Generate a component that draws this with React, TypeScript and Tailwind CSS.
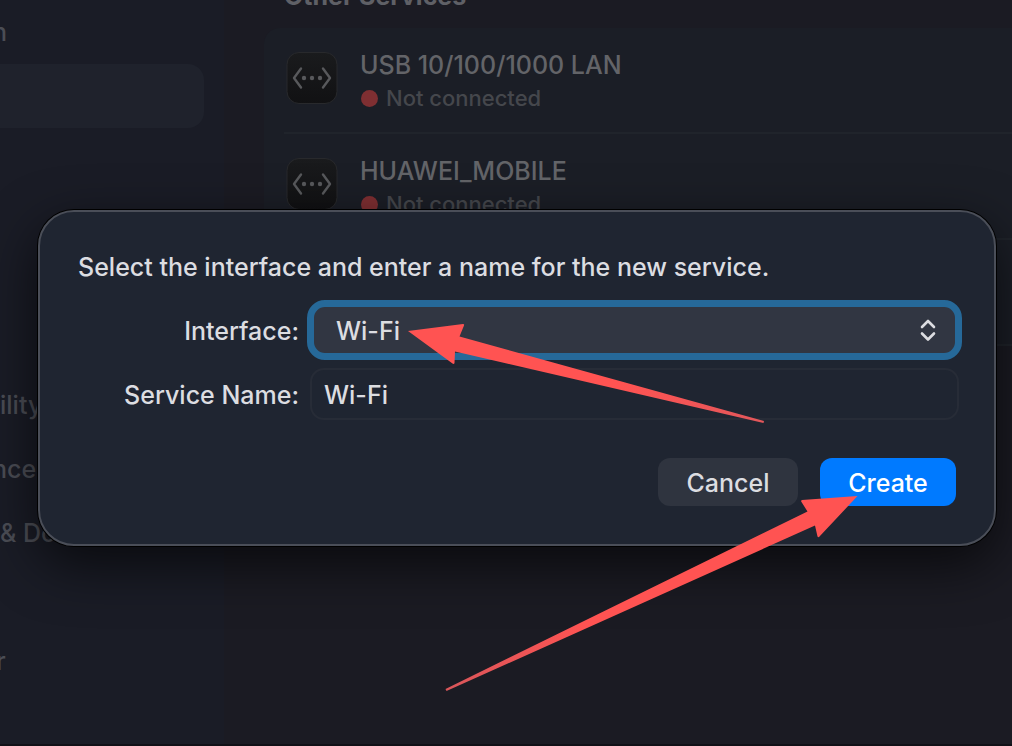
import React, { useState } from "react";

interface Service {
  name: string;
  status: string;
}

const services: Service[] = [
  { name: "USB 10/100/1000 LAN", status: "Not connected" },
  { name: "HUAWEI_MOBILE", status: "Not connected" },
  { name: "", status: "" },
];

function EthernetIcon() {
  return (
    <svg viewBox="0 0 52 52" className="size-[52px] shrink-0" aria-hidden="true">
      <defs>
        <linearGradient id="tile" x1="0" y1="0" x2="0" y2="1">
          <stop offset="0" stopColor="#1a1b1d" />
          <stop offset="1" stopColor="#111113" />
        </linearGradient>
      </defs>
      <rect x="1" y="0.500" width="50" height="51" rx="12" fill="url(#tile)" stroke="#28292c" />
      <g fill="none" stroke="#58595c" strokeWidth="2.400" strokeLinecap="round" strokeLinejoin="round">
        <path d="M15 16.500L8 26L15 35.500" />
        <path d="M37 16.500L44 26L37 35.500" />
      </g>
      <g fill="#58595c">
        <circle cx="18" cy="26" r="2.200" />
        <circle cx="26" cy="26" r="2.200" />
        <circle cx="34" cy="26" r="2.200" />
      </g>
    </svg>
  );
}

function Sidebar() {
  return (
    <nav className="w-[224px] shrink-0 bg-[#1a1c26] text-[25px] leading-8 font-medium text-[#4b4d55]">
      <div className="flex h-16 items-center">
        <span className="-ml-2">n</span>
      </div>
      <div className="mr-5 h-16 rounded-r-2xl bg-[#1f222c]" />
      <div className="mt-[245px] flex h-16 items-center">ility</div>
      <div className="flex h-16 items-center">
        <span className="-ml-2">nce</span>
      </div>
      <div className="flex h-16 items-center">&amp; Dock</div>
      <div className="mt-16 flex h-16 items-center">
        <span className="-ml-1">r</span>
      </div>
    </nav>
  );
}

function ServiceList() {
  return (
    <main className="min-w-0 flex-1 bg-[#1b1b23] pl-10">
      <h2 className="-mt-5 ml-5 h-12 text-[25px] leading-8 font-bold text-[#5f6066]">
        Other Services
      </h2>
      <ul className="rounded-l-2xl bg-[#1b1e26] pl-5">
        {services.map((service, index) => (
          <li
            key={index}
            className="flex h-[106px] gap-6 border-b-2 border-[#20242b] pt-6 pl-0.5"
          >
            {service.name && (
              <>
                <EthernetIcon />
                <div className="-mt-1 -ml-0.5">
                  <p className="pt-px text-[25px] leading-8 font-medium text-[#636468]">
                    {service.name}
                  </p>
                  <p className="flex items-center gap-2 pt-px pl-px text-[22px] leading-8 font-medium text-[#45474c]">
                    <span className="size-[17px] rounded-full bg-[#7f2f32]" />
                    {service.status}
                  </p>
                </div>
              </>
            )}
          </li>
        ))}
      </ul>
    </main>
  );
}

function NewServiceDialog() {
  const [iface, setIface] = useState("Wi-Fi");
  const [name, setName] = useState("Wi-Fi");

  return (
    <form
      role="dialog"
      aria-labelledby="dialog-title"
      onSubmit={(e) => e.preventDefault()}
      className="rounded-[36px] border-2 border-[#4a4e58] bg-[#1f2531] px-[38px] pt-[39px] pb-[38px] text-[25px] leading-8 font-medium text-[#dcdde1] shadow-[0_0_0_1px_#000,0_18px_54px_rgba(0,0,0,0.65)]"
    >
      <h1 id="dialog-title" className="whitespace-nowrap">
        Select the interface and enter a name for the new service.
      </h1>
      <div className="mt-[17px] -mr-1.5 grid grid-cols-[221px_1fr] items-center gap-2">
        <label htmlFor="interface" className="pt-0.5 text-right whitespace-nowrap">
          Interface:
        </label>
        <div className="relative">
          <select
            id="interface"
            value={iface}
            onChange={(e) => setIface(e.target.value)}
            className="h-[60px] w-full appearance-none rounded-[18px] border-[7px] border-[#266999] bg-[#313642] px-[22px] pt-0.5 outline-none"
          >
            <option>Wi-Fi</option>
            <option>Ethernet</option>
          </select>
          <svg
            viewBox="0 0 16 24"
            className="pointer-events-none absolute top-[18px] right-[26px] h-6 w-4"
            fill="none"
            stroke="#dcdde1"
            strokeWidth="2.600"
            strokeLinecap="round"
            strokeLinejoin="round"
          >
            <path d="M2 9L8 3L14 9M2 15.500L8 21.500L14 15.500" />
          </svg>
        </div>
        <label htmlFor="service-name" className="pt-0.5 text-right whitespace-nowrap">
          Service Name:
        </label>
        <div className="px-[3px]">
          <input
            id="service-name"
            type="text"
            value={name}
            onChange={(e) => setName(e.target.value)}
            className="block h-[52px] w-full rounded-[14px] border-2 border-[#272c37] bg-transparent px-3 pt-0.5 outline-none"
          />
        </div>
      </div>
      <div className="mt-[38px] flex justify-end gap-[22px]">
        <button type="button" className="h-12 w-[140px] rounded-xl bg-[#2f343f] pt-0.5">
          Cancel
        </button>
        <button type="submit" className="h-12 w-[136px] rounded-xl bg-[#007aff] pt-0.5 text-white">
          Create
        </button>
      </div>
    </form>
  );
}

// Red pointers drawn over the window
function Arrows() {
  return (
    <svg
      viewBox="0 0 1012 746"
      className="pointer-events-none absolute top-0 left-0 h-[746px] w-[1012px]"
      aria-hidden="true"
    >
      <defs>
        <linearGradient id="tail-a" x1="1" y1="0" x2="0" y2="0">
          <stop offset="0" stopColor="#e2575b" />
          <stop offset="0.4" stopColor="#ff5352" />
        </linearGradient>
        <linearGradient id="tail-b" x1="0" y1="0" x2="1" y2="0">
          <stop offset="0" stopColor="#d9565a" />
          <stop offset="0.35" stopColor="#ff5352" />
        </linearGradient>
      </defs>
      <path
        d="M408 331L463 324Q464.500 324 464 325.500L459.500 336.500L764 421L763.500 423L455 351.500L454.500 363Q454 364.500 452.500 363.500Z"
        fill="url(#tail-a)"
      />
      <path
        d="M857.500 496L802 500Q800.500 500.500 801.500 502L807.500 511.500L445.500 689L446.500 691L815 525.500L817.500 536.500Q818.500 538 819.500 536.500Z"
        fill="url(#tail-b)"
      />
    </svg>
  );
}

function App() {
  return (
    <div className="relative h-screen overflow-hidden font-['Inter','Liberation_Sans',sans-serif]">
      <div className="flex h-full border-b-2 border-[#111117]">
        <Sidebar />
        <ServiceList />
      </div>
      <div className="absolute inset-x-0 top-[210px] pr-4 pl-[38px]">
        <NewServiceDialog />
      </div>
      <Arrows />
    </div>
  );
}

export default App;
